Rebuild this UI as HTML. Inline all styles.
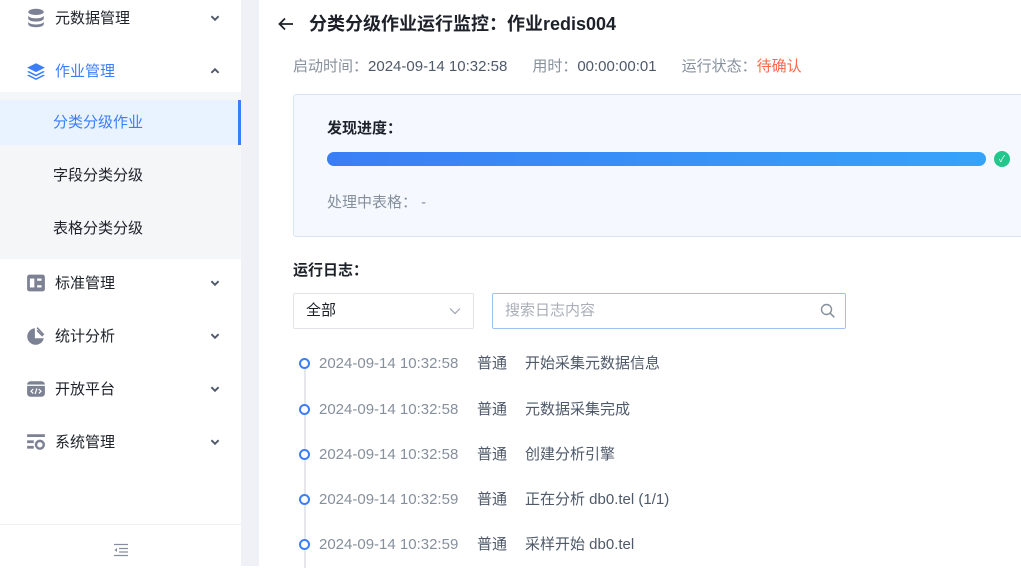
<!DOCTYPE html><html><head><meta charset="utf-8"><style>
*{margin:0;padding:0;box-sizing:border-box}
body{width:1021px;height:566px;overflow:hidden;background:#fff;font-family:"Liberation Sans","Noto Sans CJK SC",sans-serif;position:relative;color:#1d2129}
.abs{position:absolute}
.side{left:0;top:0;width:241px;height:566px;background:#fff}
.gut{left:241px;top:0;width:18px;height:566px;background:#eff1f6}
.mi{position:absolute;left:0;width:241px;height:53px;display:flex;align-items:center;font-size:15px;color:#1d2129}
.mi .ic{position:absolute;left:26px;width:20px;height:20px}
.mi .t{position:absolute;left:55px}
.mi .ar{position:absolute;left:209px;width:12px;height:12px}
.sub{position:absolute;left:0;top:92px;width:241px;height:167px;background:#f5f6f8}
.si{position:absolute;left:0;width:241px;height:45px;line-height:45px;padding-left:53px;font-size:15px;color:#1d2129}
.gray{color:#86909c}
.row{position:absolute;left:293px;height:20px;font-size:15px;line-height:20px;white-space:nowrap}
.row .dot{position:absolute;left:6px;top:4px;width:11px;height:11px;border:2px solid #3c7ef7;border-radius:50%;background:#fff}
.row .d{position:absolute;left:26px;color:#86909c}
.row .l{position:absolute;left:184px;color:#4e5969}
.row .m{position:absolute;left:232px;color:#4e5969}
</style></head><body>
<div class="abs side"></div><div class="abs gut"></div>
<div class="mi" style="top:-9px"><svg class="ic" viewBox="0 0 18 18"><ellipse cx="9" cy="3.5" rx="7" ry="2.8" fill="#7c8294"/><path d="M2 6.5c0 1.6 3.1 2.8 7 2.8s7-1.2 7-2.8v3c0 1.6-3.1 2.8-7 2.8s-7-1.2-7-2.8z" fill="#7c8294"/><path d="M2 12c0 1.6 3.1 2.8 7 2.8s7-1.2 7-2.8v2.5c0 1.6-3.1 2.8-7 2.8s-7-1.2-7-2.8z" fill="#7c8294"/></svg><span class="t">元数据管理</span><svg class="ar" viewBox="0 0 10 10"><path d="M2 3.5l3 3 3-3" stroke="#4e5969" stroke-width="1.6" fill="none"/></svg></div>
<div class="mi" style="top:44px;color:#3c7ef7"><svg class="ic" viewBox="0 0 18 18"><path d="M9 2l8 4-8 4-8-4z" fill="#3c7ef7"/><path d="M2.5 9l6.5 3.3 6.5-3.3 1.5.8-8 4-8-4z" fill="#3c7ef7"/><path d="M2.5 12.3l6.5 3.3 6.5-3.3 1.5.8-8 4-8-4z" fill="#3c7ef7"/></svg><span class="t">作业管理</span><svg class="ar" viewBox="0 0 10 10"><path d="M2 6.5l3-3 3 3" stroke="#4e5969" stroke-width="1.6" fill="none"/></svg></div>
<div class="sub"></div>
<div class="si" style="top:100px;background:#e8f3ff;color:#3c7ef7;border-right:3px solid #3c7ef7">分类分级作业</div>
<div class="si" style="top:153px">字段分类分级</div>
<div class="si" style="top:206px">表格分类分级</div>
<div class="mi" style="top:256px"><svg class="ic" viewBox="0 0 18 18"><rect x="1" y="1.5" width="16" height="15" rx="2" fill="#7c8294"/><rect x="3.5" y="5" width="4" height="8" fill="#fff"/><rect x="10" y="5" width="4" height="2" fill="#fff"/><rect x="10" y="11" width="4" height="2" fill="#fff"/></svg><span class="t">标准管理</span><svg class="ar" viewBox="0 0 10 10"><path d="M2 3.5l3 3 3-3" stroke="#4e5969" stroke-width="1.6" fill="none"/></svg></div>
<div class="mi" style="top:309px"><svg class="ic" viewBox="0 0 18 18"><path d="M8 2A7.5 7.5 0 1 0 16 11H8z" fill="#7c8294"/><path d="M10 1.5l6 6.5" stroke="#7c8294" stroke-width="1.5"/><path d="M10 4l5 5" stroke="#7c8294" stroke-width="1.5"/></svg><span class="t">统计分析</span><svg class="ar" viewBox="0 0 10 10"><path d="M2 3.5l3 3 3-3" stroke="#4e5969" stroke-width="1.6" fill="none"/></svg></div>
<div class="mi" style="top:362px"><svg class="ic" viewBox="0 0 18 18"><rect x="1" y="2" width="16" height="14" rx="3" fill="#7c8294"/><rect x="1" y="5" width="16" height="1.2" fill="#fff"/><path d="M6.5 9l-2 2 2 2M11.5 9l2 2-2 2M9.8 8.5l-1.6 5" stroke="#fff" stroke-width="1.1" fill="none"/></svg><span class="t">开放平台</span><svg class="ar" viewBox="0 0 10 10"><path d="M2 3.5l3 3 3-3" stroke="#4e5969" stroke-width="1.6" fill="none"/></svg></div>
<div class="mi" style="top:415px"><svg class="ic" viewBox="0 0 18 18"><rect x="1" y="2" width="16" height="2.5" fill="#7c8294"/><rect x="1" y="7.5" width="6" height="2.5" fill="#7c8294"/><rect x="1" y="12.5" width="6" height="2.5" fill="#7c8294"/><circle cx="12.5" cy="11.5" r="3.5" fill="none" stroke="#7c8294" stroke-width="2.2"/></svg><span class="t">系统管理</span><svg class="ar" viewBox="0 0 10 10"><path d="M2 3.5l3 3 3-3" stroke="#4e5969" stroke-width="1.6" fill="none"/></svg></div>
<div class="abs" style="left:0;top:524px;width:241px;height:1px;background:#eef0f3"></div>
<svg class="abs" style="left:113px;top:543px" width="16" height="14" viewBox="0 0 16 14"><path d="M1 1.5h14M6 5.5h9M6 9h9M1 12.5h14" stroke="#86909c" stroke-width="1.2"/><path d="M4 5l-2.5 2L4 9z" fill="#86909c"/></svg>

<svg class="abs" style="left:277px;top:15px" width="18" height="18" viewBox="0 0 18 18"><path d="M16 9H3M8 3.5L2.5 9 8 14.5" stroke="#1d2129" stroke-width="1.8" fill="none"/></svg>
<div class="abs" style="left:309px;top:12px;font-size:18px;font-weight:bold;line-height:24px;white-space:nowrap">分类分级作业运行监控：作业redis004</div>
<div class="abs" style="left:293px;top:57px;font-size:15px;line-height:20px;white-space:nowrap"><span class="gray">启动时间：</span><span style="color:#4e5969">2024-09-14 10:32:58</span><span class="gray" style="margin-left:25px">用时：</span><span style="color:#4e5969">00:00:00:01</span><span class="gray" style="margin-left:25px">运行状态：</span><span style="color:#f76b4a">待确认</span></div>
<div class="abs" style="left:293px;top:94px;width:740px;height:143px;background:#f5f9ff;border:1px solid #d5e5fb;border-radius:3px"></div>
<div class="abs" style="left:327px;top:119px;font-size:15px;font-weight:bold;line-height:20px">发现进度：</div>
<div class="abs" style="left:327px;top:152px;width:659px;height:14px;border-radius:7px;background:linear-gradient(90deg,#3a7ef6,#36a3fa)"></div>
<div class="abs" style="left:994px;top:151px;width:16px;height:16px;border-radius:50%;background:#23c68b;color:#fff;font-size:9px;line-height:16px;text-align:center">✓</div>
<div class="abs gray" style="left:327px;top:193px;font-size:15px;line-height:20px">处理中表格： -</div>
<div class="abs" style="left:293px;top:261px;font-size:15px;font-weight:bold;line-height:20px">运行日志：</div>
<div class="abs" style="left:293px;top:293px;width:181px;height:36px;border:1px solid #e0e3e8;border-radius:2px;font-size:15px;line-height:34px;padding-left:12px;color:#1d2129">全部<svg class="abs" style="left:155px;top:12px" width="12" height="10" viewBox="0 0 12 10"><path d="M1 2.5l5 5 5-5" stroke="#9ca3af" stroke-width="1.2" fill="none"/></svg></div>
<div class="abs" style="left:492px;top:293px;width:354px;height:36px;border:1px solid #9ec2f5;border-radius:2px;font-size:15px;line-height:34px;padding-left:12px;color:#a9aeb8">搜索日志内容<svg class="abs" style="left:327px;top:9px" width="16" height="16" viewBox="0 0 16 16"><circle cx="6.5" cy="6.5" r="5" stroke="#86909c" stroke-width="1.4" fill="none"/><path d="M10.3 10.3l4 4" stroke="#86909c" stroke-width="1.5"/></svg></div>
<div class="abs" style="left:304px;top:368px;width:2px;height:200px;background:#e5e7eb"></div>
<div class="row" style="top:354px"><span class="dot"></span><span class="d">2024-09-14 10:32:58</span><span class="l">普通</span><span class="m">开始采集元数据信息</span></div>
<div class="row" style="top:400px"><span class="dot"></span><span class="d">2024-09-14 10:32:58</span><span class="l">普通</span><span class="m">元数据采集完成</span></div>
<div class="row" style="top:445px"><span class="dot"></span><span class="d">2024-09-14 10:32:58</span><span class="l">普通</span><span class="m">创建分析引擎</span></div>
<div class="row" style="top:490px"><span class="dot"></span><span class="d">2024-09-14 10:32:59</span><span class="l">普通</span><span class="m">正在分析 db0.tel (1/1)</span></div>
<div class="row" style="top:535px"><span class="dot"></span><span class="d">2024-09-14 10:32:59</span><span class="l">普通</span><span class="m">采样开始 db0.tel</span></div>
</body></html>
